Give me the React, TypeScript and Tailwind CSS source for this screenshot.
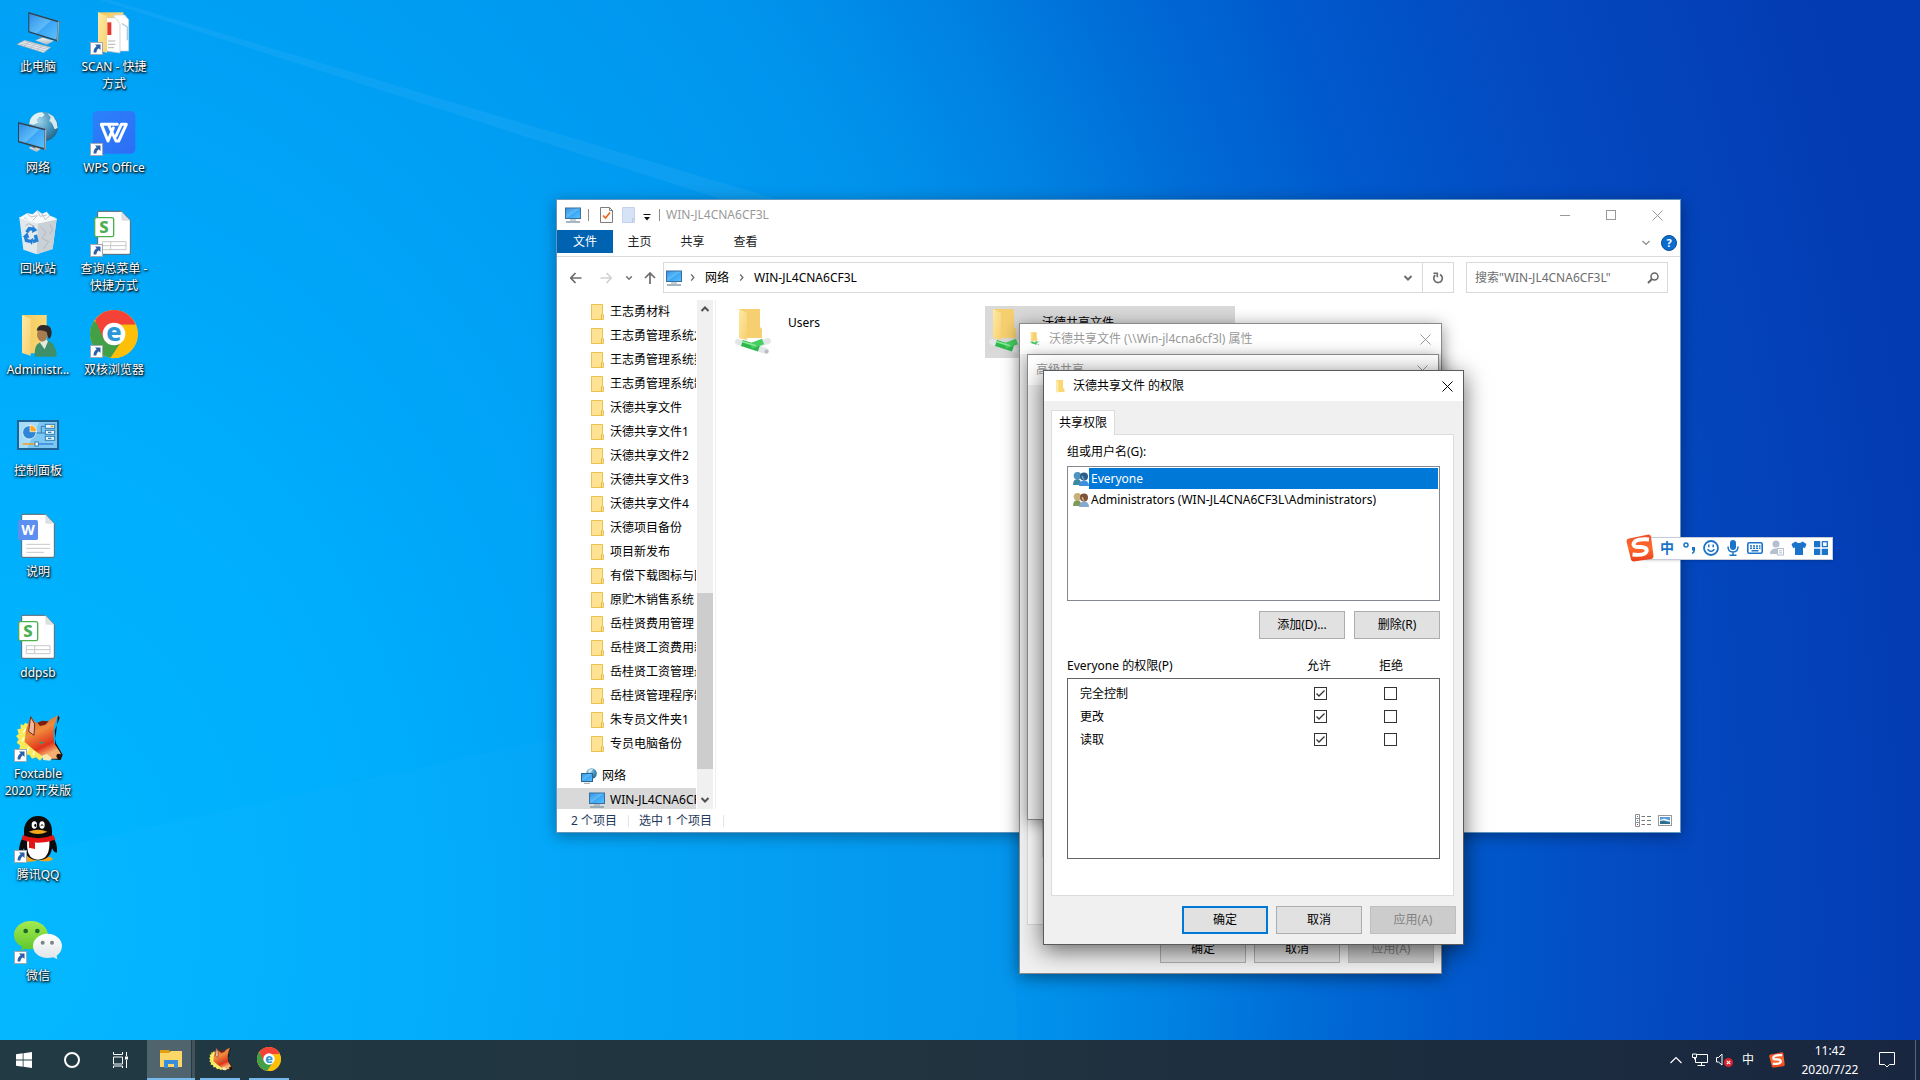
import type { ReactNode } from "react";

const FONT = "font-['Noto_Sans','Noto_Sans_CJK_SC',sans-serif]";

/* ---------- desktop icons, all on a 144 grid ---------- */

function Big({ children }: { children: ReactNode }) {
  return (
    <svg viewBox="0 0 144 144" className="block size-12 overflow-visible">
      {children}
    </svg>
  );
}

function Gradients() {
  return (
    <svg className="absolute size-0" aria-hidden="true">
      <defs>
        <linearGradient id="screen" x1="0" y1="0" x2="1" y2="1">
          <stop offset="0" stopColor="#2d8fe8" />
          <stop offset="0.5" stopColor="#5fbcf8" />
          <stop offset="0.52" stopColor="#3aa5f5" />
          <stop offset="1" stopColor="#58c2ff" />
        </linearGradient>
        <linearGradient id="metal" x1="0" y1="0" x2="0" y2="1">
          <stop offset="0" stopColor="#f4f6f8" />
          <stop offset="1" stopColor="#a9b3bc" />
        </linearGradient>
        <linearGradient id="flap" x1="0" y1="0" x2="1" y2="1">
          <stop offset="0" stopColor="#ffeaa6" />
          <stop offset="1" stopColor="#f7d06f" />
        </linearGradient>
        <linearGradient id="back" x1="0" y1="0" x2="1" y2="0">
          <stop offset="0" stopColor="#f1c75c" />
          <stop offset="1" stopColor="#fbd978" />
        </linearGradient>
        <linearGradient id="wps" x1="0" y1="0" x2="1" y2="1">
          <stop offset="0" stopColor="#2b82fb" />
          <stop offset="1" stopColor="#2d6df6" />
        </linearGradient>
        <radialGradient id="globe" cx="0.35" cy="0.3" r="0.8">
          <stop offset="0" stopColor="#9fd3ea" />
          <stop offset="0.6" stopColor="#3f8fb8" />
          <stop offset="1" stopColor="#215d80" />
        </radialGradient>
        <linearGradient id="fox" x1="0" y1="0" x2="0.4" y2="1">
          <stop offset="0" stopColor="#c9632a" />
          <stop offset="0.45" stopColor="#f08a3c" />
          <stop offset="0.8" stopColor="#e0321a" />
          <stop offset="1" stopColor="#f5b070" />
        </linearGradient>
        <linearGradient id="green" x1="0" y1="0" x2="0" y2="1">
          <stop offset="0" stopColor="#a4ea4f" />
          <stop offset="1" stopColor="#5cc62c" />
        </linearGradient>
        <linearGradient id="bubble" x1="0" y1="0" x2="0" y2="1">
          <stop offset="0" stopColor="#ffffff" />
          <stop offset="1" stopColor="#dfe4e8" />
        </linearGradient>
        <linearGradient id="sogou" x1="0" y1="0" x2="0" y2="1">
          <stop offset="0" stopColor="#f0502a" />
          <stop offset="0.5" stopColor="#ff6a2a" />
          <stop offset="1" stopColor="#e8401c" />
        </linearGradient>
      </defs>
    </svg>
  );
}

function ComputerIcon() {
  return (
    <Big>
      <path d="M74 88 L98 94 L100 104 L76 100Z" fill="#7d8c98" />
      <path d="M64 100 L86 92 L120 101 L98 113Z" fill="url(#metal)" />
      <path d="M43 15 L136 43 L133 104 L43 76Z" fill="#34414d" />
      <path d="M136 43 L133 104 L129 102 L131 44Z" fill="#9aa7b1" />
      <path d="M46 20 L131 46 L128 98 L46 73Z" fill="url(#screen)" />
      <path d="M9 112 L32 100 L110 121 L89 137Z" fill="#e6ebef" stroke="#9aa5ae" strokeWidth="2" />
      <path d="M18 111 L94 132 M25 107 L100 127 M32 103 L106 123 M28 118 L48 104 M48 123 L66 109 M68 129 L86 115" stroke="#a9b4bd" strokeWidth="2" />
    </Big>
  );
}

function GlobeScreenIcon() {
  return (
    <Big>
      <circle cx="88" cy="56" r="44" fill="url(#globe)" />
      <path d="M48 36 Q58 14 84 13 L92 20 L84 28 L76 26 L68 36 L72 44 L58 50 L46 48Z" fill="#dff0f2" />
      <path d="M100 15 L118 25 L128 42 L131 60 L122 64 L114 46 L106 38 L110 28Z" fill="#d3e9ee" />
      <path d="M44 120 L60 112 L84 120 L68 132Z" fill="url(#metal)" />
      <path d="M50 106 L64 110 V122 L52 118Z" fill="#74838f" />
      <path d="M12 42 L98 64 L95 127 L12 103Z" fill="#34414d" />
      <path d="M98 64 L95 127 L91 125 L93 64Z" fill="#a4b0b9" />
      <path d="M15 47 L92 67 L90 120 L15 99Z" fill="url(#screen)" />
    </Big>
  );
}

function RecycleBinIcon() {
  return (
    <Big>
      <path d="M16 26 L128 30 L116 120 L68 136 L28 122Z" fill="#e3e8ec" />
      <path d="M72 38 L128 30 L116 120 L68 136Z" fill="#c9d0d6" />
      <path d="M16 26 L40 12 L56 16 L70 4 L84 14 L98 8 L108 20 L128 28 L72 42Z" fill="#f7f9fa" />
      <path d="M40 12 L50 24 L70 20 L56 34 M70 4 L78 22 L98 18 M84 14 L94 32 L108 20 M30 26 L44 34" stroke="#bfc7cd" strokeWidth="3" fill="none" />
      <path d="M80 54 L96 70 L84 88 L104 98 L88 120 M108 46 L116 62 L106 76 M34 50 L44 44 L62 52" stroke="#b1bac1" strokeWidth="3" fill="none" />
      <path d="M16 26 L72 42 L128 30" stroke="#fff" strokeWidth="3" fill="none" />
      <g fill="none" stroke="#1f7fd8" strokeWidth="10">
        <path d="M38 70 L46 59 L60 61" />
        <path d="M34 80 L37 94 L48 97" />
        <path d="M56 98 L68 94 L64 78" />
      </g>
      <path d="M56 50 L70 64 L54 72Z M26 84 L40 70 L46 86Z M58 86 L54 108 L44 96Z" fill="#1f7fd8" />
    </Big>
  );
}

function UserFolderIcon() {
  return (
    <Big>
      <path d="M24 15 H98 V130 H44Z" fill="url(#back)" />
      <path d="M24 15 L50 26 V137 L24 129Z" fill="url(#flap)" />
      <path d="M62 140 Q60 104 76 98 L104 92 Q128 102 128 140Z" fill="#3f8f6b" />
      <path d="M78 98 L92 118 L102 94 L92 88Z" fill="#e6e9dd" />
      <ellipse cx="85" cy="74" rx="16" ry="21" fill="#a97c50" />
      <path d="M68 62 Q70 44 90 45 Q114 46 113 68 Q112 84 104 86 Q100 76 98 66 Q84 58 68 62Z" fill="#2f2a28" />
    </Big>
  );
}

function ControlPanelIcon() {
  return (
    <Big>
      <rect x="9" y="27" width="126" height="90" fill="#1f6496" />
      <rect x="15" y="33" width="114" height="78" fill="#7cc8f2" />
      <path d="M15 33 H76 L40 111 H15Z" fill="#a6dcf8" />
      <circle cx="46" cy="64" r="20" fill="#2f86d6" stroke="#fff" strokeWidth="2" />
      <path d="M48 62 V42 A20 20 0 0 1 68 62Z" fill="#ffa726" stroke="#fff" strokeWidth="2" />
      <path d="M68 66 H82 V46 H94 M82 66 H94" stroke="#2f7fb8" strokeWidth="3" fill="none" />
      <g fill="#e8f6fd" stroke="#2f7fb8" strokeWidth="3">
        <rect x="94" y="40" width="28" height="12" />
        <rect x="94" y="58" width="28" height="12" />
        <rect x="94" y="76" width="28" height="12" />
      </g>
      <path d="M110 46 H118" stroke="#ff9800" strokeWidth="4" />
      <path d="M102 64 H112 M102 82 H112" stroke="#2f7fb8" strokeWidth="4" />
      <path d="M26 99 H68" stroke="#ff9800" strokeWidth="4" />
      <path d="M68 99 H118" stroke="#2f7fd8" strokeWidth="4" />
      <rect x="63" y="93" width="10" height="12" fill="#fff" stroke="#2f7fb8" strokeWidth="3" />
    </Big>
  );
}

function DocIcon({ kind }: { kind: "W" | "S" }) {
  return (
    <Big>
      <path d="M27 7 H94 L121 35 V132 Q121 136 117 136 H27 Q23 136 23 132 V11 Q23 7 27 7Z" fill="#fff" stroke="#5b6770" strokeWidth="3" />
      <path d="M94 7 L121 35 H98 Q94 35 94 31Z" fill="#dcdfe2" />
      {kind === "W" ? (
        <>
          <path d="M37 97 H108 M37 109 H108 M37 121 H90" stroke="#c8c8c8" strokeWidth="3" />
          <rect x="12" y="24" width="60" height="60" rx="5" fill="#5b8ff0" />
          <text x="42" y="69" textAnchor="middle" fontSize="42" fontWeight="700" fill="#fff">W</text>
        </>
      ) : (
        <>
          <path d="M37 98 H108 V122 H37Z M37 110 H108 M62 98 V122" stroke="#c8c8c8" strokeWidth="3" fill="none" />
          <rect x="14" y="26" width="57" height="57" rx="5" fill="#fff" stroke="#4caf50" strokeWidth="4" />
          <text x="42" y="72" textAnchor="middle" fontSize="50" fontWeight="800" fill="#4caf50">S</text>
        </>
      )}
    </Big>
  );
}

function ScanFolderIcon() {
  return (
    <Big>
      <path d="M24 16 H100 V60 H24Z" fill="url(#back)" />
      <path d="M72 24 H104 L116 38 V132 H72Z" fill="#fff" stroke="#c9cdd0" strokeWidth="2" />
      <path d="M96 50 L112 60 V100" stroke="#a9cbe4" strokeWidth="4" fill="none" />
      <path d="M48 32 H76 L90 50 V138 L48 132Z" fill="#fdfdfd" stroke="#bfc3c6" strokeWidth="2" />
      <path d="M52 46 H64 V84 H52Z" fill="#e2382f" />
      <path d="M54 102 H76 M54 112 H76 M54 122 H72" stroke="#b5b5b5" strokeWidth="3" />
      <path d="M24 16 L51 28 V138 L24 130Z" fill="url(#flap)" />
    </Big>
  );
}

function WpsIcon() {
  return (
    <Big>
      <rect x="8" y="9" width="128" height="128" rx="14" fill="url(#wps)" />
      <path d="M82 49 H34 L54 99 L70 60 M56 51 L78 99 L86 99 L109 49 H94 L78 84" fill="none" stroke="#fff" strokeWidth="9" strokeLinejoin="round" strokeLinecap="round" />
    </Big>
  );
}

function BrowserMark() {
  return (
    <>
      <circle cx="72" cy="72" r="72" fill="#fbc02d" />
      <path d="M72 72 L12 32 A72 72 0 0 0 62 143 L92 98Z" fill="#43a047" />
      <path d="M72 0 A72 72 0 0 1 137 44 H72 L40 84 L15 29 A72 72 0 0 1 72 0Z" fill="#f44336" />
      <path d="M137 44 A72 72 0 0 1 62 144 L102 84 L96 44Z" fill="#fdbf08" />
      <circle cx="72" cy="72" r="34" fill="#fff" />
      <text x="72" y="94" textAnchor="middle" fontSize="76" fontWeight="800" fill="#2a97d8">e</text>
    </>
  );
}

function FoxMark() {
  return (
    <>
      <path d="M34 26 L28 34 L20 30 L20 44 L10 46 L14 60 L6 66 L14 76 L8 86 L18 94 L16 106 L30 108 L32 122 L46 122 L54 134 L66 130 L78 140 L86 130 L104 136 L96 90 L60 40Z" fill="#f8ea5a" />
      <path d="M36 44 L28 56 M30 70 L24 82 M44 100 L40 112 M60 112 L58 124" stroke="#fffbd0" strokeWidth="5" />
      <path d="M132 4 L137 12 L122 50 L126 88 L146 122 L140 138 L110 136 L122 96Z" fill="#1d0b06" />
      <path d="M50 8 L64 24 L78 30 L96 28 L112 14 L132 4 L122 30 L118 52 L120 86 L140 118 Q140 132 128 134 L112 134 L96 122 L84 126 L60 108 L32 84 L36 48Z" fill="url(#fox)" />
      <path d="M70 26 L84 20 L104 22 L94 32 L78 36Z" fill="#7c1f10" />
      <path d="M50 8 L62 30 L60 64 L44 52Z" fill="#efb7a0" stroke="#7c2a14" strokeWidth="3" />
      <path d="M76 82 L92 86 L80 90Z" fill="#2e9a8a" />
      <path d="M84 126 L98 120 L114 132 L108 140 L88 138Z" fill="#fde7b0" />
      <circle cx="134" cy="126" r="7" fill="#2a0f08" />
    </>
  );
}

function QqIcon() {
  return (
    <Big>
      <ellipse cx="44" cy="132" rx="28" ry="8" fill="#f5a81c" />
      <ellipse cx="94" cy="132" rx="22" ry="7" fill="#f5a81c" />
      <path d="M72 3 C98 3 114 22 114 48 L114 62 Q132 86 129 112 Q122 116 114 100 Q108 136 72 136 Q38 136 30 100 Q20 118 15 110 Q14 84 30 62 V48 C30 22 48 3 72 3Z" fill="#0b0b0b" />
      <path d="M40 72 Q34 134 72 134 Q110 134 106 72Z" fill="#fff" />
      <ellipse cx="61" cy="30" rx="8" ry="11" fill="#fff" />
      <ellipse cx="84" cy="30" rx="8" ry="11" fill="#fff" />
      <ellipse cx="64" cy="31" rx="3" ry="5" fill="#000" />
      <path d="M80 32 Q84 26 88 32" stroke="#000" strokeWidth="3" fill="none" />
      <path d="M44 50 Q72 38 100 50 Q72 64 44 50Z" fill="#f5a81c" />
      <path d="M26 60 Q72 80 118 60 L124 74 Q72 92 24 74Z" fill="#e31414" />
      <path d="M45 78 L63 82 V102 L45 98Z" fill="#e31414" />
    </Big>
  );
}

function WechatIcon() {
  return (
    <Big>
      <path d="M50 15 C80 15 102 34 102 57 C102 82 80 100 50 100 Q40 100 34 98 L20 106 L24 92 C8 84 0 72 0 57 C0 34 22 15 50 15Z" fill="url(#green)" />
      <circle cx="35" cy="45" r="7" fill="#196b2a" />
      <circle cx="70" cy="45" r="7" fill="#196b2a" />
      <path d="M100 53 C126 53 144 70 144 90 C144 102 138 112 128 119 L130 130 L118 124 Q110 126 100 126 C76 126 57 110 57 90 C57 70 76 53 100 53Z" fill="url(#bubble)" />
      <circle cx="86" cy="80" r="6" fill="#7d8488" />
      <circle cx="114" cy="80" r="6" fill="#7d8488" />
    </Big>
  );
}

function ShortcutArrow() {
  return (
    <svg viewBox="0 0 13 13" className="absolute bottom-0 left-0 size-[13px]">
      <rect x="0.5" y="0.5" width="12" height="12" fill="#fff" stroke="#9fa9b3" />
      <path d="M5 2.5 H10.5 V8 L8.7 6.3 Q6.5 7.6 6.3 10.6 H3.6 Q3.2 6.6 6.7 4.3Z" fill="#2b5fa8" />
    </svg>
  );
}

type DesktopItem = { label: string; icon: ReactNode; shortcut?: boolean };

const COLUMN_ONE: DesktopItem[] = [
  { label: "此电脑", icon: <ComputerIcon /> },
  { label: "网络", icon: <GlobeScreenIcon /> },
  { label: "回收站", icon: <RecycleBinIcon /> },
  { label: "Administr...", icon: <UserFolderIcon /> },
  { label: "控制面板", icon: <ControlPanelIcon /> },
  { label: "说明", icon: <DocIcon kind="W" /> },
  { label: "ddpsb", icon: <DocIcon kind="S" /> },
  { label: "Foxtable\n2020 开发版", icon: <Big><FoxMark /></Big>, shortcut: true },
  { label: "腾讯QQ", icon: <QqIcon />, shortcut: true },
  { label: "微信", icon: <WechatIcon />, shortcut: true },
];

const COLUMN_TWO: DesktopItem[] = [
  { label: "SCAN - 快捷\n方式", icon: <ScanFolderIcon />, shortcut: true },
  { label: "WPS Office", icon: <WpsIcon />, shortcut: true },
  { label: "查询总菜单 -\n快捷方式", icon: <DocIcon kind="S" />, shortcut: true },
  { label: "双核浏览器", icon: <Big><BrowserMark /></Big>, shortcut: true },
];

function DesktopColumn({ items }: { items: DesktopItem[] }) {
  return (
    <div className="flex w-[76px] flex-col">
      {items.map((item) => (
        <button key={item.label} className="flex h-[101px] flex-col items-center pt-[7px]">
          <span className="relative block">
            {item.icon}
            {item.shortcut && <ShortcutArrow />}
          </span>
          <span className="mt-[3px] whitespace-pre text-center text-xs leading-[17px] text-white [text-shadow:1px_1px_2px_#000,0_1px_3px_#000]">
            {item.label}
          </span>
        </button>
      ))}
    </div>
  );
}

/* ---------- small icons ---------- */

function SmallComputer() {
  return (
    <svg viewBox="0 0 16 16" className="size-4 shrink-0">
      <rect x="0.5" y="1" width="15" height="10.5" fill="url(#screen)" stroke="#3a6f99" />
      <path d="M5 13 H11" stroke="#8ca0b0" />
      <path d="M1 15 H15" stroke="#7f97aa" strokeWidth="1.4" />
    </svg>
  );
}

function SmallNetwork() {
  return (
    <svg viewBox="0 0 16 16" className="size-4 shrink-0">
      <circle cx="10.5" cy="5.5" r="5.3" fill="url(#globe)" />
      <path d="M7 3 Q9 0.6 12 1 L10 4 L8 5Z" fill="#d3e9ee" />
      <rect x="0.5" y="5.5" width="11" height="8" fill="url(#screen)" stroke="#2f648c" />
      <path d="M3 15.3 H9" stroke="#8ca0b0" />
    </svg>
  );
}

function SmallFolder() {
  return (
    <svg viewBox="0 0 13 16" className="h-4 w-[13px] shrink-0">
      <path d="M0.5 0.5 H11.5 V10 L12.5 11 V15.5 H0.5Z" fill="#ffe394" stroke="#e9c24f" />
      <path d="M10.5 15 V11 L11.5 10" fill="none" stroke="#e2b53c" />
    </svg>
  );
}

function SharedFolder({ className }: { className: string }) {
  return (
    <svg viewBox="0 0 37 48" className={className}>
      <path d="M5 1 H26 V19 L28 21 V30 H10Z" fill="#f6d070" />
      <path d="M5 1 L13 5 V32 L5 30Z" fill="url(#flap)" />
      <path d="M4 34 L32 43" stroke="#e3e6e8" strokeWidth="6" strokeLinecap="round" />
      <path d="M20 38 L34 33" stroke="#e3e6e8" strokeWidth="6" strokeLinecap="round" />
      <path d="M8 35 L25 40.500" stroke="#2fb84c" strokeWidth="6.500" />
      <path d="M17 38 L29 33.500" stroke="#46cf60" strokeWidth="6" />
      <path d="M8 33.500 L22 37.800" stroke="#8beb9a" strokeWidth="1.500" />
      <circle cx="32.500" cy="43.500" r="2" fill="#b8bdc1" />
    </svg>
  );
}

function CloseIcon() {
  return (
    <svg viewBox="0 0 11 11" className="size-[11px]">
      <path d="M0.5 0.5 L10.5 10.500 M10.500 0.5 L0.5 10.500" stroke="currentColor" fill="none" />
    </svg>
  );
}

function Chevron({ d, className, w = 1.5 }: { d: string; className: string; w?: number }) {
  return (
    <svg viewBox="0 0 10 10" className={className}>
      <path d={d} fill="none" stroke="currentColor" strokeWidth={w} />
    </svg>
  );
}

const DOWN = "M1.500 3 L5 6.500 L8.500 3";
const RIGHT = "M3.500 1.500 L6.500 5 L3.500 8.500";
const UP = "M1.500 7 L5 3.500 L8.500 7";

function GroupIcon({ selected }: { selected?: boolean }) {
  const skin = selected ? ["#4f93c0", "#2c5c8a"] : ["#c9b07a", "#7a5238"];
  const cloth = selected ? ["#3b8aa0", "#3f8fe0"] : ["#7f9a5a", "#86a9cf"];
  return (
    <svg viewBox="0 0 16 16" className="size-4 shrink-0">
      <path d="M0 14 Q0 8 4.500 8 Q8 8 8.500 14Z" fill={cloth[0]} />
      <circle cx="4.500" cy="4.800" r="3.800" fill={skin[0]} />
      <path d="M6 15 Q6.500 9.500 11.500 9.500 Q16 10 16 15Z" fill={cloth[1]} />
      <circle cx="11" cy="5.500" r="4" fill={skin[1]} />
      <path d="M8.500 5 Q9 8.800 11.500 9 L10 5Z" fill={selected ? "#6fa8d0" : "#d9a884"} />
    </svg>
  );
}

/* ---------- explorer ---------- */

const FOLDERS = [
  "王志勇材料",
  "王志勇管理系统2",
  "王志勇管理系统数据",
  "王志勇管理系统制作",
  "沃德共享文件",
  "沃德共享文件1",
  "沃德共享文件2",
  "沃德共享文件3",
  "沃德共享文件4",
  "沃德项目备份",
  "项目新发布",
  "有偿下载图标与图片",
  "原贮木销售系统",
  "岳桂贤费用管理",
  "岳桂贤工资费用新",
  "岳桂贤工资管理最",
  "岳桂贤管理程序制",
  "朱专员文件夹1",
  "专员电脑备份",
];

function Explorer() {
  return (
    <section className="absolute left-[556px] top-[199px] flex h-[634px] w-[1125px] flex-col border border-[#1c6aa5]/70 bg-white shadow-[0_3px_14px_rgba(0,0,0,0.35)]">
      <header className="flex h-[30px] shrink-0 items-center pl-2 text-[#999]">
        <SmallComputer />
        <span className="ml-[7px] h-3 w-px bg-[#8a8a8a]" />
        <svg viewBox="0 0 13 16" className="ml-[11px] h-4 w-[13px]">
          <path d="M0.500 0.500 H9.500 L12.500 3.500 V15.500 H0.500Z" fill="#fafafa" stroke="#7d7d7d" />
          <path d="M9.500 0.500 V3.500 H12.500" fill="none" stroke="#7d7d7d" />
          <path d="M3 8.500 L5.500 11 L10 5.500" fill="none" stroke="#e8641b" strokeWidth="1.600" />
        </svg>
        <svg viewBox="0 0 13 16" className="ml-[9px] h-4 w-[13px]">
          <path d="M0.500 0.500 H12.500 V15.500 H0.500Z" fill="#d6e2f5" stroke="#c3d3ec" />
          <path d="M10.500 15 V11.500 H12.500" fill="none" stroke="#b7c9e6" />
        </svg>
        <svg viewBox="0 0 8 7" className="ml-2 mt-1 h-[7px] w-2">
          <path d="M0.500 0.500 H7.500" stroke="#111" />
          <path d="M1 3 H7 L4 6.500Z" fill="#111" />
        </svg>
        <span className="ml-2 h-3 w-px bg-[#8a8a8a]" />
        <h1 className="ml-[6px] text-xs">WIN-JL4CNA6CF3L</h1>
        <div className="ml-auto flex h-full">
          <button aria-label="最小化" className="flex w-[46px] items-center justify-center">
            <span className="h-px w-[10px] bg-[#999]" />
          </button>
          <button aria-label="最大化" className="flex w-[46px] items-center justify-center">
            <span className="size-[10px] border border-[#999]" />
          </button>
          <button aria-label="关闭" className="flex w-[46px] items-center justify-center">
            <CloseIcon />
          </button>
        </div>
      </header>

      <nav className="flex h-[27px] shrink-0 items-start border-b border-[#dadbdc] text-xs text-[#222]">
        <button className="h-[23px] w-14 bg-[#0063b1] text-white">文件</button>
        <button className="h-6 w-[53px]">主页</button>
        <button className="h-6 w-[53px]">共享</button>
        <button className="h-6 w-[53px]">查看</button>
        <div className="ml-auto flex items-center gap-[10px] pr-[3px] pt-[5px] text-[#8a8a8a]">
          <Chevron d={DOWN} className="size-[10px]" w={1.2} />
          <svg viewBox="0 0 16 16" className="size-4">
            <circle cx="8" cy="8" r="7.500" fill="#0a6cce" stroke="#0b4d93" />
            <text x="8" y="12" textAnchor="middle" fontSize="11" fontWeight="700" fill="#fff">?</text>
          </svg>
        </div>
      </nav>

      <div className="flex h-[43px] shrink-0 items-center pb-[2px] pl-[13px] pr-3">
        <button aria-label="后退" className="text-[#6d6d6d]">
          <svg viewBox="0 0 12 12" className="size-3">
            <path d="M11.500 6 H1 M5.500 1 L0.800 6 L5.500 11" fill="none" stroke="currentColor" strokeWidth="1.700" />
          </svg>
        </button>
        <button aria-label="前进" className="ml-[18px] text-[#d2d2d2]">
          <svg viewBox="0 0 12 12" className="size-3">
            <path d="M0.500 6 H11 M6.500 1 L11.200 6 L6.500 11" fill="none" stroke="currentColor" strokeWidth="1.700" />
          </svg>
        </button>
        <Chevron d={DOWN} className="ml-[13px] size-2 text-[#7a7a7a]" w={2} />
        <button aria-label="向上" className="ml-[11px] text-[#6d6d6d]">
          <svg viewBox="0 0 12 12" className="size-3">
            <path d="M6 12 V1 M1 6 L6 1 L11 6" fill="none" stroke="currentColor" strokeWidth="1.700" />
          </svg>
        </button>
        <div className="ml-[7px] flex h-[31px] flex-1 items-center border border-[#d9d9d9] pl-[2px] text-xs text-black">
          <SmallComputer />
          <Chevron d={RIGHT} className="ml-[6px] size-[9px] text-[#6d6d6d]" />
          <button className="ml-2">网络</button>
          <Chevron d={RIGHT} className="ml-2 size-[9px] text-[#6d6d6d]" />
          <button className="ml-2">WIN-JL4CNA6CF3L</button>
          <Chevron d={DOWN} className="ml-auto mr-[9px] size-[10px] text-[#6d6d6d]" w={2} />
          <button aria-label="刷新" className="flex h-full w-[31px] items-center justify-center border-l border-[#d9d9d9] text-[#6d6d6d]">
            <svg viewBox="0 0 12 12" className="size-3">
              <path d="M8 2.400 A4.300 4.300 0 1 1 3.200 3" fill="none" stroke="currentColor" strokeWidth="1.700" />
              <path d="M1.500 1.300 H5.300 V5.300" fill="none" stroke="currentColor" strokeWidth="1.600" />
            </svg>
          </button>
        </div>
        <label className="ml-3 flex h-[31px] w-[202px] items-center border border-[#d9d9d9] px-2">
          <input
            aria-label="搜索"
            placeholder={'搜索"WIN-JL4CNA6CF3L"'}
            className="min-w-0 flex-1 bg-transparent text-xs outline-none placeholder:text-[#6d6d6d]"
          />
          <svg viewBox="0 0 12 12" className="size-3">
            <circle cx="7.500" cy="4.500" r="3.500" fill="none" stroke="#666" strokeWidth="1.500" />
            <path d="M5 7 L1 11" stroke="#666" strokeWidth="2" />
          </svg>
        </label>
      </div>

      <div className="flex min-h-0 flex-1">
        <aside className="flex w-[159px] shrink-0 border-r border-[#f0f0f0]">
          <div className="h-full w-[139px] overflow-hidden whitespace-nowrap text-xs text-black">
            {FOLDERS.map((name) => (
              <button key={name} className="flex h-6 w-full items-center gap-[6px] pl-[34px]">
                <SmallFolder />
                {name}
              </button>
            ))}
            <button className="mt-2 flex h-6 w-full items-center gap-[5px] pl-6">
              <SmallNetwork />
              网络
            </button>
            <button className="flex h-6 w-full items-center gap-[5px] bg-[#d9d9d9] pl-8">
              <SmallComputer />
              WIN-JL4CNA6CF3L
            </button>
          </div>
          <div className="ml-px flex w-4 flex-col items-center bg-[#f0f0f0] text-[#505050]">
            <Chevron d={UP} className="mt-1 size-[10px]" w={2} />
            <span className="mt-auto h-44 w-full bg-[#cdcdcd]" />
            <Chevron d={DOWN} className="mb-1 mt-[26px] size-[10px]" w={2} />
          </div>
        </aside>
        <main className="flex items-start gap-1 pl-[15px] pt-[6px] text-xs text-black">
          <button className="flex h-[52px] w-[250px] items-start">
            <SharedFolder className="ml-[3px] mt-[2px] h-12 w-[37px]" />
            <span className="ml-[17px] mt-[9px]">Users</span>
          </button>
          <button className="flex h-[52px] w-[250px] items-start bg-[#d9d9d9]">
            <SharedFolder className="ml-[3px] mt-[2px] h-12 w-[37px]" />
            <span className="ml-[17px] mt-[9px]">沃德共享文件</span>
          </button>
        </main>
      </div>

      <footer className="flex h-[23px] shrink-0 items-center pl-[14px] pr-2 text-xs text-[#1e395b]">
        <span>2 个项目</span>
        <span className="ml-[11px] h-3 w-px bg-[#e5e5e5]" />
        <span className="ml-[10px]">选中 1 个项目</span>
        <span className="ml-[11px] h-3 w-px bg-[#e5e5e5]" />
        <svg viewBox="0 0 16 13" className="ml-auto h-[13px] w-4">
          <path d="M0.500 0.500 H4.500 V12.500 H0.500Z M0.500 4.500 H4.500 M0.500 8.500 H4.500" fill="none" stroke="#8e8e8e" />
          <path d="M6.500 2.500 H10 M12 2.500 H16 M6.500 6.500 H10 M12 6.500 H16 M6.500 10.500 H10 M12 10.500 H16" stroke="#777" />
          <path d="M2 2.500 H3 M2 6.500 H3" stroke="#3a7fd0" />
          <path d="M2 10.500 H3" stroke="#c33" />
        </svg>
        <svg viewBox="0 0 14 11" className="ml-[7px] h-[11px] w-[14px]">
          <rect x="0.500" y="0.500" width="13" height="10" fill="#fff" stroke="#999" />
          <rect x="2" y="2" width="10" height="7" fill="#5a9be0" />
          <path d="M2 5 L6 3.500 L12 5.500 V6.500 H2Z" fill="#e4f0f8" />
          <path d="M2 9 V6 L6 5.500 L12 7.500 V9Z" fill="#2d6f8d" />
        </svg>
      </footer>
    </section>
  );
}

/* ---------- dialogs ---------- */

function DialogButton({ children, look = "normal" }: { children: ReactNode; look?: "normal" | "default" | "disabled" }) {
  const looks = {
    normal: "border border-[#adadad] bg-[#e1e1e1] text-black",
    default: "border-2 border-[#0078d7] bg-[#e1e1e1] text-black",
    disabled: "border border-[#bfbfbf] bg-[#cccccc] text-[#838383]",
  };
  return (
    <button disabled={look === "disabled"} className={`h-7 w-[86px] text-xs ${looks[look]}`}>
      {children}
    </button>
  );
}

function PropertiesDialog() {
  return (
    <section className="absolute left-[1019px] top-[323px] flex h-[651px] w-[423px] flex-col border border-[#8a8a8a] bg-[#f0f0f0] shadow-[0_3px_16px_rgba(0,0,0,0.45)]">
      <header className="flex h-[30px] shrink-0 items-center bg-white pl-[9px] pr-[10px] text-xs text-[#999]">
        <SharedFolder className="h-[14px] w-[11px]" />
        <h2 className="ml-[9px]">沃德共享文件 (\\Win-jl4cna6cf3l) 属性</h2>
        <button aria-label="关闭" className="ml-auto">
          <CloseIcon />
        </button>
      </header>
      <div className="mx-[7px] mt-8 flex-1 border border-[#dcdcdc] bg-white p-[14px]">
        <div className="h-[456px] border border-[#dcdcdc]" />
      </div>
      <footer className="flex justify-end gap-2 px-[7px] py-[10px]">
        <DialogButton>确定</DialogButton>
        <DialogButton>取消</DialogButton>
        <DialogButton look="disabled">应用(A)</DialogButton>
      </footer>
    </section>
  );
}

function AdvancedSharingDialog() {
  return (
    <section className="absolute left-[1027px] top-[354px] h-[466px] w-[412px] border border-[#8a8a8a] bg-[#f0f0f0] shadow-[0_3px_14px_rgba(0,0,0,0.4)]">
      <header className="flex h-[30px] items-center justify-between bg-white pl-2 pr-[10px] text-xs text-[#999]">
        <h2>高级共享</h2>
        <button aria-label="关闭">
          <CloseIcon />
        </button>
      </header>
    </section>
  );
}

const PERMISSIONS = [
  { name: "完全控制", allow: true, deny: false },
  { name: "更改", allow: true, deny: false },
  { name: "读取", allow: true, deny: false },
];

function CheckBox({ label, checked }: { label: string; checked: boolean }) {
  return (
    <span className="relative mx-auto block size-[13px]">
      <input
        type="checkbox"
        aria-label={label}
        defaultChecked={checked}
        className="peer block size-[13px] appearance-none border border-[#333] bg-white"
      />
      <svg viewBox="0 0 13 13" className="pointer-events-none absolute inset-0 hidden size-[13px] peer-checked:block">
        <path d="M2.500 6.500 L5 9 L10.500 3.500" fill="none" stroke="#333" strokeWidth="1.300" />
      </svg>
    </span>
  );
}

function PermissionsDialog() {
  return (
    <section className="absolute left-[1043px] top-[370px] flex h-[575px] w-[421px] flex-col border border-[#5a5a5a] bg-[#f0f0f0] text-xs text-black shadow-[0_5px_22px_rgba(0,0,0,0.6)]">
      <header className="flex h-[30px] shrink-0 items-center bg-white pl-[11px] pr-[10px]">
        <svg viewBox="0 0 10 13" className="h-[13px] w-[10px]">
          <path d="M1 0 H8 V8 L9.500 9 V12 H1Z" fill="#fbd774" />
          <path d="M1 0 L3.500 1.500 V13 L1 12Z" fill="#ffe9a6" />
        </svg>
        <h2 className="ml-2">沃德共享文件 的权限</h2>
        <button aria-label="关闭" className="ml-auto">
          <CloseIcon />
        </button>
      </header>

      <div className="flex px-[7px] pt-[9px]">
        <button className="relative z-10 -mb-px h-[25px] w-16 border border-b-0 border-[#dcdcdc] bg-white">共享权限</button>
      </div>

      <div className="ml-[7px] mr-[9px] flex-1 border border-[#dcdcdc] bg-white pl-[15px] pr-[13px] pt-[9px]">
        <p id="group-label" className="leading-4">组或用户名(G):</p>
        <ul role="listbox" aria-labelledby="group-label" className="mt-[6px] h-[135px] border border-[#828790] bg-white py-px pl-[5px] pr-px">
          <li role="option" aria-selected="true" className="flex h-[21px] items-center">
            <GroupIcon selected />
            <span className="flex-1 bg-[#0078d7] pl-[2px] leading-[21px] text-white">Everyone</span>
          </li>
          <li role="option" aria-selected="false" className="flex h-[21px] items-center">
            <GroupIcon />
            <span className="pl-[2px]">Administrators (WIN-JL4CNA6CF3L\Administrators)</span>
          </li>
        </ul>
        <div className="mt-[10px] flex justify-end gap-[9px]">
          <DialogButton>添加(D)...</DialogButton>
          <DialogButton>删除(R)</DialogButton>
        </div>
        <div className="mt-[19px] flex pr-[13px] leading-4">
          <span className="flex-1">Everyone 的权限(P)</span>
          <span className="w-[72px] text-center">允许</span>
          <span className="w-[72px] text-center">拒绝</span>
        </div>
        <div className="mt-1 h-[181px] border border-[#646464] pr-[14px] pt-[3px]">
          <table className="w-full">
            <tbody>
              {PERMISSIONS.map((row) => (
                <tr key={row.name} className="h-[23px]">
                  <td className="pl-3">{row.name}</td>
                  <td className="w-[70px]">
                    <CheckBox label={`${row.name} 允许`} checked={row.allow} />
                  </td>
                  <td className="w-[70px]">
                    <CheckBox label={`${row.name} 拒绝`} checked={row.deny} />
                  </td>
                </tr>
              ))}
            </tbody>
          </table>
        </div>
      </div>

      <footer className="flex justify-end gap-2 px-[7px] py-[10px]">
        <DialogButton look="default">确定</DialogButton>
        <DialogButton>取消</DialogButton>
        <DialogButton look="disabled">应用(A)</DialogButton>
      </footer>
    </section>
  );
}

/* ---------- input method bar ---------- */

function SogouMark({ className }: { className: string }) {
  return (
    <svg viewBox="0 0 28 28" className={className}>
      <path d="M3 4.500 L22.500 0.500 Q24.500 0.500 25 2.500 L27.500 22 Q27.500 24.500 25.500 25 L7.500 27.500 Q5.500 27.500 5 25.500 L0.500 7.500 Q0.300 5.200 3 4.500Z" fill="url(#sogou)" />
      <path d="M23 5.500 Q8 4.500 7.500 10.500 Q8 13.500 14.500 13 Q21.500 13 20.500 17.500 Q18.500 22 6.500 20.500" fill="none" stroke="#fff" strokeWidth="4" />
    </svg>
  );
}

function InputMethodBar() {
  return (
    <div className="absolute left-[1626px] top-[534px] flex items-center text-[#1b74c9]">
      <SogouMark className="relative z-10 size-7" />
      <div className="-ml-3 flex h-[23px] items-center border border-[#c5cbd8] bg-white pl-[13px] shadow-sm">
        <button className="w-[22px] text-center text-sm font-bold leading-5">中</button>
        <button aria-label="标点" className="flex w-[22px] justify-center">
          <svg viewBox="0 0 14 14" className="size-[14px]">
            <circle cx="4" cy="4" r="2" fill="none" stroke="currentColor" strokeWidth="1.500" />
            <path d="M10 6 H13 V9 Q13 12 10 13 V11.500 Q11.300 10.800 11.300 9.500 H10Z" fill="currentColor" />
          </svg>
        </button>
        <button aria-label="表情" className="flex w-[22px] justify-center">
          <svg viewBox="0 0 16 16" className="size-4">
            <circle cx="8" cy="8" r="7" fill="none" stroke="currentColor" strokeWidth="1.800" />
            <path d="M5.800 4.500 V7.300 M10.200 4.500 V7.300 M4.500 9.300 Q8 13.500 11.500 9.300" fill="none" stroke="currentColor" strokeWidth="1.500" />
          </svg>
        </button>
        <button aria-label="语音" className="flex w-[22px] justify-center">
          <svg viewBox="0 0 14 16" className="h-4 w-[14px]">
            <rect x="4" y="0" width="6" height="10" rx="3" fill="currentColor" />
            <path d="M2 6.500 Q2 12 7 12 Q12 12 12 6.500 M7 12 V15 M3.500 15.200 H10.500" fill="none" stroke="currentColor" strokeWidth="1.500" />
          </svg>
        </button>
        <button aria-label="软键盘" className="flex w-[22px] justify-center">
          <svg viewBox="0 0 16 12" className="h-3 w-4">
            <rect x="0.800" y="0.800" width="14.400" height="10.400" rx="1.500" fill="none" stroke="currentColor" strokeWidth="1.600" />
            <path d="M3 4 H5 M6 4 H8 M9 4 H11 M12 4 H13.500 M3 6.300 H5 M6 6.300 H8 M9 6.300 H11 M12 6.300 H13.500 M4.500 8.800 H11.500" stroke="currentColor" strokeWidth="1.400" />
          </svg>
        </button>
        <button aria-label="登录" className="flex w-[22px] justify-center">
          <svg viewBox="0 0 16 16" className="size-4">
            <circle cx="7" cy="4" r="3.500" fill="#b4bfd0" />
            <path d="M1 14 Q1 8.500 7 8.500 Q12 8.500 13 14Z" fill="#b4bfd0" />
            <rect x="8.500" y="8.500" width="6" height="6.500" fill="#fff" stroke="#b4bfd0" />
            <path d="M10 10.800 H13 M10 12.800 H13" stroke="#b4bfd0" />
          </svg>
        </button>
        <button aria-label="皮肤" className="flex w-[22px] justify-center">
          <svg viewBox="0 0 16 16" className="size-4">
            <path d="M4.500 1.500 Q8 4.500 11.500 1.500 L15.500 4 L14 8 L12 7.500 V15 H4 V7.500 L2 8 L0.500 4Z" fill="currentColor" />
          </svg>
        </button>
        <button aria-label="工具箱" className="flex w-[22px] justify-center">
          <svg viewBox="0 0 14 14" className="size-[14px]">
            <path d="M0 0 H6.300 V6.300 H0Z M0 7.700 H6.300 V14 H0Z M7.700 7.700 H14 V14 H7.700Z" fill="currentColor" />
            <rect x="8.400" y="0.700" width="4.900" height="4.900" fill="none" stroke="currentColor" strokeWidth="1.300" />
          </svg>
        </button>
      </div>
    </div>
  );
}

/* ---------- taskbar ---------- */

function Taskbar() {
  return (
    <footer className="relative flex h-10 shrink-0 items-stretch bg-linear-to-r from-[#213a43] via-[#20333f] to-[#19263f] text-xs text-white">
      <button aria-label="开始" className="flex w-12 items-center justify-center">
        <svg viewBox="0 0 16 16" className="size-4">
          <path d="M0 2.300 L6.700 1.300 V7.600 H0Z M7.500 1.200 L16 0 V7.600 H7.500Z M0 8.400 H6.700 V14.700 L0 13.700Z M7.500 8.400 H16 V16 L7.500 14.800Z" fill="#fff" />
        </svg>
      </button>
      <button aria-label="搜索" className="flex w-12 items-center justify-center">
        <span className="size-4 rounded-full border-2 border-white" />
      </button>
      <button aria-label="任务视图" className="flex w-12 items-center justify-center">
        <svg viewBox="0 0 17 16" className="h-4 w-[17px]">
          <path d="M1.500 0 V2.500 H10.500 V0 M1.500 5 H10.500 V12 H1.500Z M1.500 16 V14 H10.500 V16 M14.500 0 V4 M14.500 8 V16" fill="none" stroke="#fff" />
          <rect x="13" y="4.500" width="3" height="3" fill="#fff" />
        </svg>
      </button>
      <button aria-label="文件资源管理器" className="ml-[3px] flex w-12 border-b-2 border-[#76b9ed]">
        <span className="flex h-full w-11 items-center justify-center bg-[#4f646c] pl-1">
          <svg viewBox="0 0 22 18" className="h-[18px] w-[22px]">
            <path d="M0 0 H9 L10 2 V5 H0Z" fill="#e0a012" />
            <path d="M0 3 H9 L11 1 H22 V17 H0Z" fill="#fdd668" />
            <path d="M4 10 H18 V18 H14 V14 H8 V18 H4Z" fill="#3a8ddb" />
          </svg>
        </span>
        <span className="ml-px h-full w-[3px] bg-[#41545c]" />
      </button>
      <button aria-label="Foxtable" className="ml-[5px] flex w-10 items-center justify-center border-b-2 border-[#76b9ed]">
        <svg viewBox="0 0 144 144" className="size-6">
          <FoxMark />
        </svg>
      </button>
      <button aria-label="双核浏览器" className="ml-[9px] flex w-10 items-center justify-center border-b-2 border-[#76b9ed]">
        <svg viewBox="0 0 144 144" className="size-6">
          <BrowserMark />
        </svg>
      </button>

      <div className="ml-auto flex items-center">
        <button aria-label="显示隐藏的图标" className="flex w-6 justify-center">
          <svg viewBox="0 0 12 8" className="h-2 w-3">
            <path d="M0.500 7 L6 1.500 L11.500 7" fill="none" stroke="#fff" strokeWidth="1.200" />
          </svg>
        </button>
        <svg viewBox="0 0 16 14" className="ml-1 h-[14px] w-4">
          <path d="M5 1.500 H15.500 V9.500 H3.500 V5 M9.500 9.500 V12.500 M5.500 12.500 H13" fill="none" stroke="#fff" />
          <path d="M0.500 1 H4.500 V4.500 H0.500Z M2.500 4.500 V6.500" fill="none" stroke="#fff" />
        </svg>
        <svg viewBox="0 0 17 14" className="ml-2 h-[14px] w-[17px]">
          <path d="M0.500 4.500 H2.500 L6 1 V12 L2.500 9 H0.500Z" fill="none" stroke="#fff" />
          <circle cx="12.500" cy="9.500" r="4.500" fill="#d9232e" />
          <path d="M10.800 7.800 L14.200 11.200 M14.200 7.800 L10.800 11.200" stroke="#fff" strokeWidth="1.200" />
        </svg>
        <button className="ml-[9px] w-3 text-xs">中</button>
        <SogouMark className="ml-[15px] size-4" />
        <div className="ml-2 flex w-[74px] flex-col items-center leading-[19px]">
          <time>11:42</time>
          <time>2020/7/22</time>
        </div>
        <button aria-label="通知" className="ml-3">
          <svg viewBox="0 0 16 16" className="size-4">
            <path d="M0.500 0.500 H15.500 V12.500 H10.500 L8 15 V15 L5.500 12.500 H0.500Z" fill="none" stroke="#fff" />
          </svg>
        </button>
        <span className="ml-5 mr-1 h-10 w-px bg-[#5b6678]" />
      </div>
    </footer>
  );
}

export default function App() {
  return (
    <div className={`relative flex min-h-screen w-full flex-col overflow-hidden ${FONT} bg-[radial-gradient(ellipse_1950px_2600px_at_0%_85%,#00b8ff_0%,#00adfd_20%,#00a3f7_32%,#0094ed_52%,#0082e2_60%,#006cd6_67%,#0059cc_75%,#0449c0_85%,#033bb2_100%)]`}>
      <Gradients />
      <svg viewBox="0 0 1920 1080" preserveAspectRatio="none" className="pointer-events-none absolute inset-0 size-full" aria-hidden="true">
        <path d="M110 0 L830 215 H770 L100 0Z" fill="#fff" opacity="0.050" />
        <path d="M0 860 L1000 640 L1020 1080 H0Z" fill="#fff" opacity="0.015" />
      </svg>
      <div className="relative flex flex-1 items-start">
        <DesktopColumn items={COLUMN_ONE} />
        <DesktopColumn items={COLUMN_TWO} />
        <Explorer />
        <PropertiesDialog />
        <AdvancedSharingDialog />
        <PermissionsDialog />
        <InputMethodBar />
      </div>
      <Taskbar />
    </div>
  );
}
